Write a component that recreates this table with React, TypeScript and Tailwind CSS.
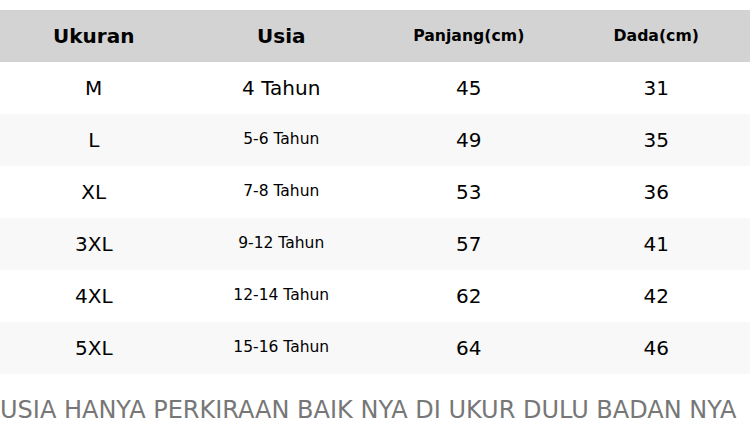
import React from "react";

const rows: [string, string, string, string, boolean][] = [
  ["M", "4 Tahun", "45", "31", false],
  ["L", "5-6 Tahun", "49", "35", true],
  ["XL", "7-8 Tahun", "53", "36", true],
  ["3XL", "9-12 Tahun", "57", "41", true],
  ["4XL", "12-14 Tahun", "62", "42", true],
  ["5XL", "15-16 Tahun", "64", "46", true],
];

export default function App() {
  return (
    <div className="w-[750px] h-[446px] bg-white pt-[10px] text-black" style={{ fontFamily: '"DejaVu Sans", sans-serif' }}>
      <div className="grid grid-cols-4 h-[52px] bg-[#d3d3d3] font-bold items-center text-center">
        <div className="text-[20px]">Ukuran</div>
        <div className="text-[20px]">Usia</div>
        <div className="text-[15.7px]">Panjang(cm)</div>
        <div className="text-[15.7px]">Dada(cm)</div>
      </div>
      {rows.map((r, i) => (
        <div
          key={i}
          className={`grid grid-cols-4 h-[52px] items-center text-center text-[20px] ${i % 2 === 1 ? "bg-[#f8f8f8]" : "bg-white"}`}
        >
          <div>{r[0]}</div>
          <div className={r[4] ? "text-[15.5px]" : ""}>{r[1]}</div>
          <div>{r[2]}</div>
          <div>{r[3]}</div>
        </div>
      ))}
      <div className="mt-[22px] text-[24px] leading-[28px] text-[#777777] whitespace-nowrap">
        USIA HANYA PERKIRAAN BAIK NYA DI UKUR DULU BADAN NYA
      </div>
    </div>
  );
}
